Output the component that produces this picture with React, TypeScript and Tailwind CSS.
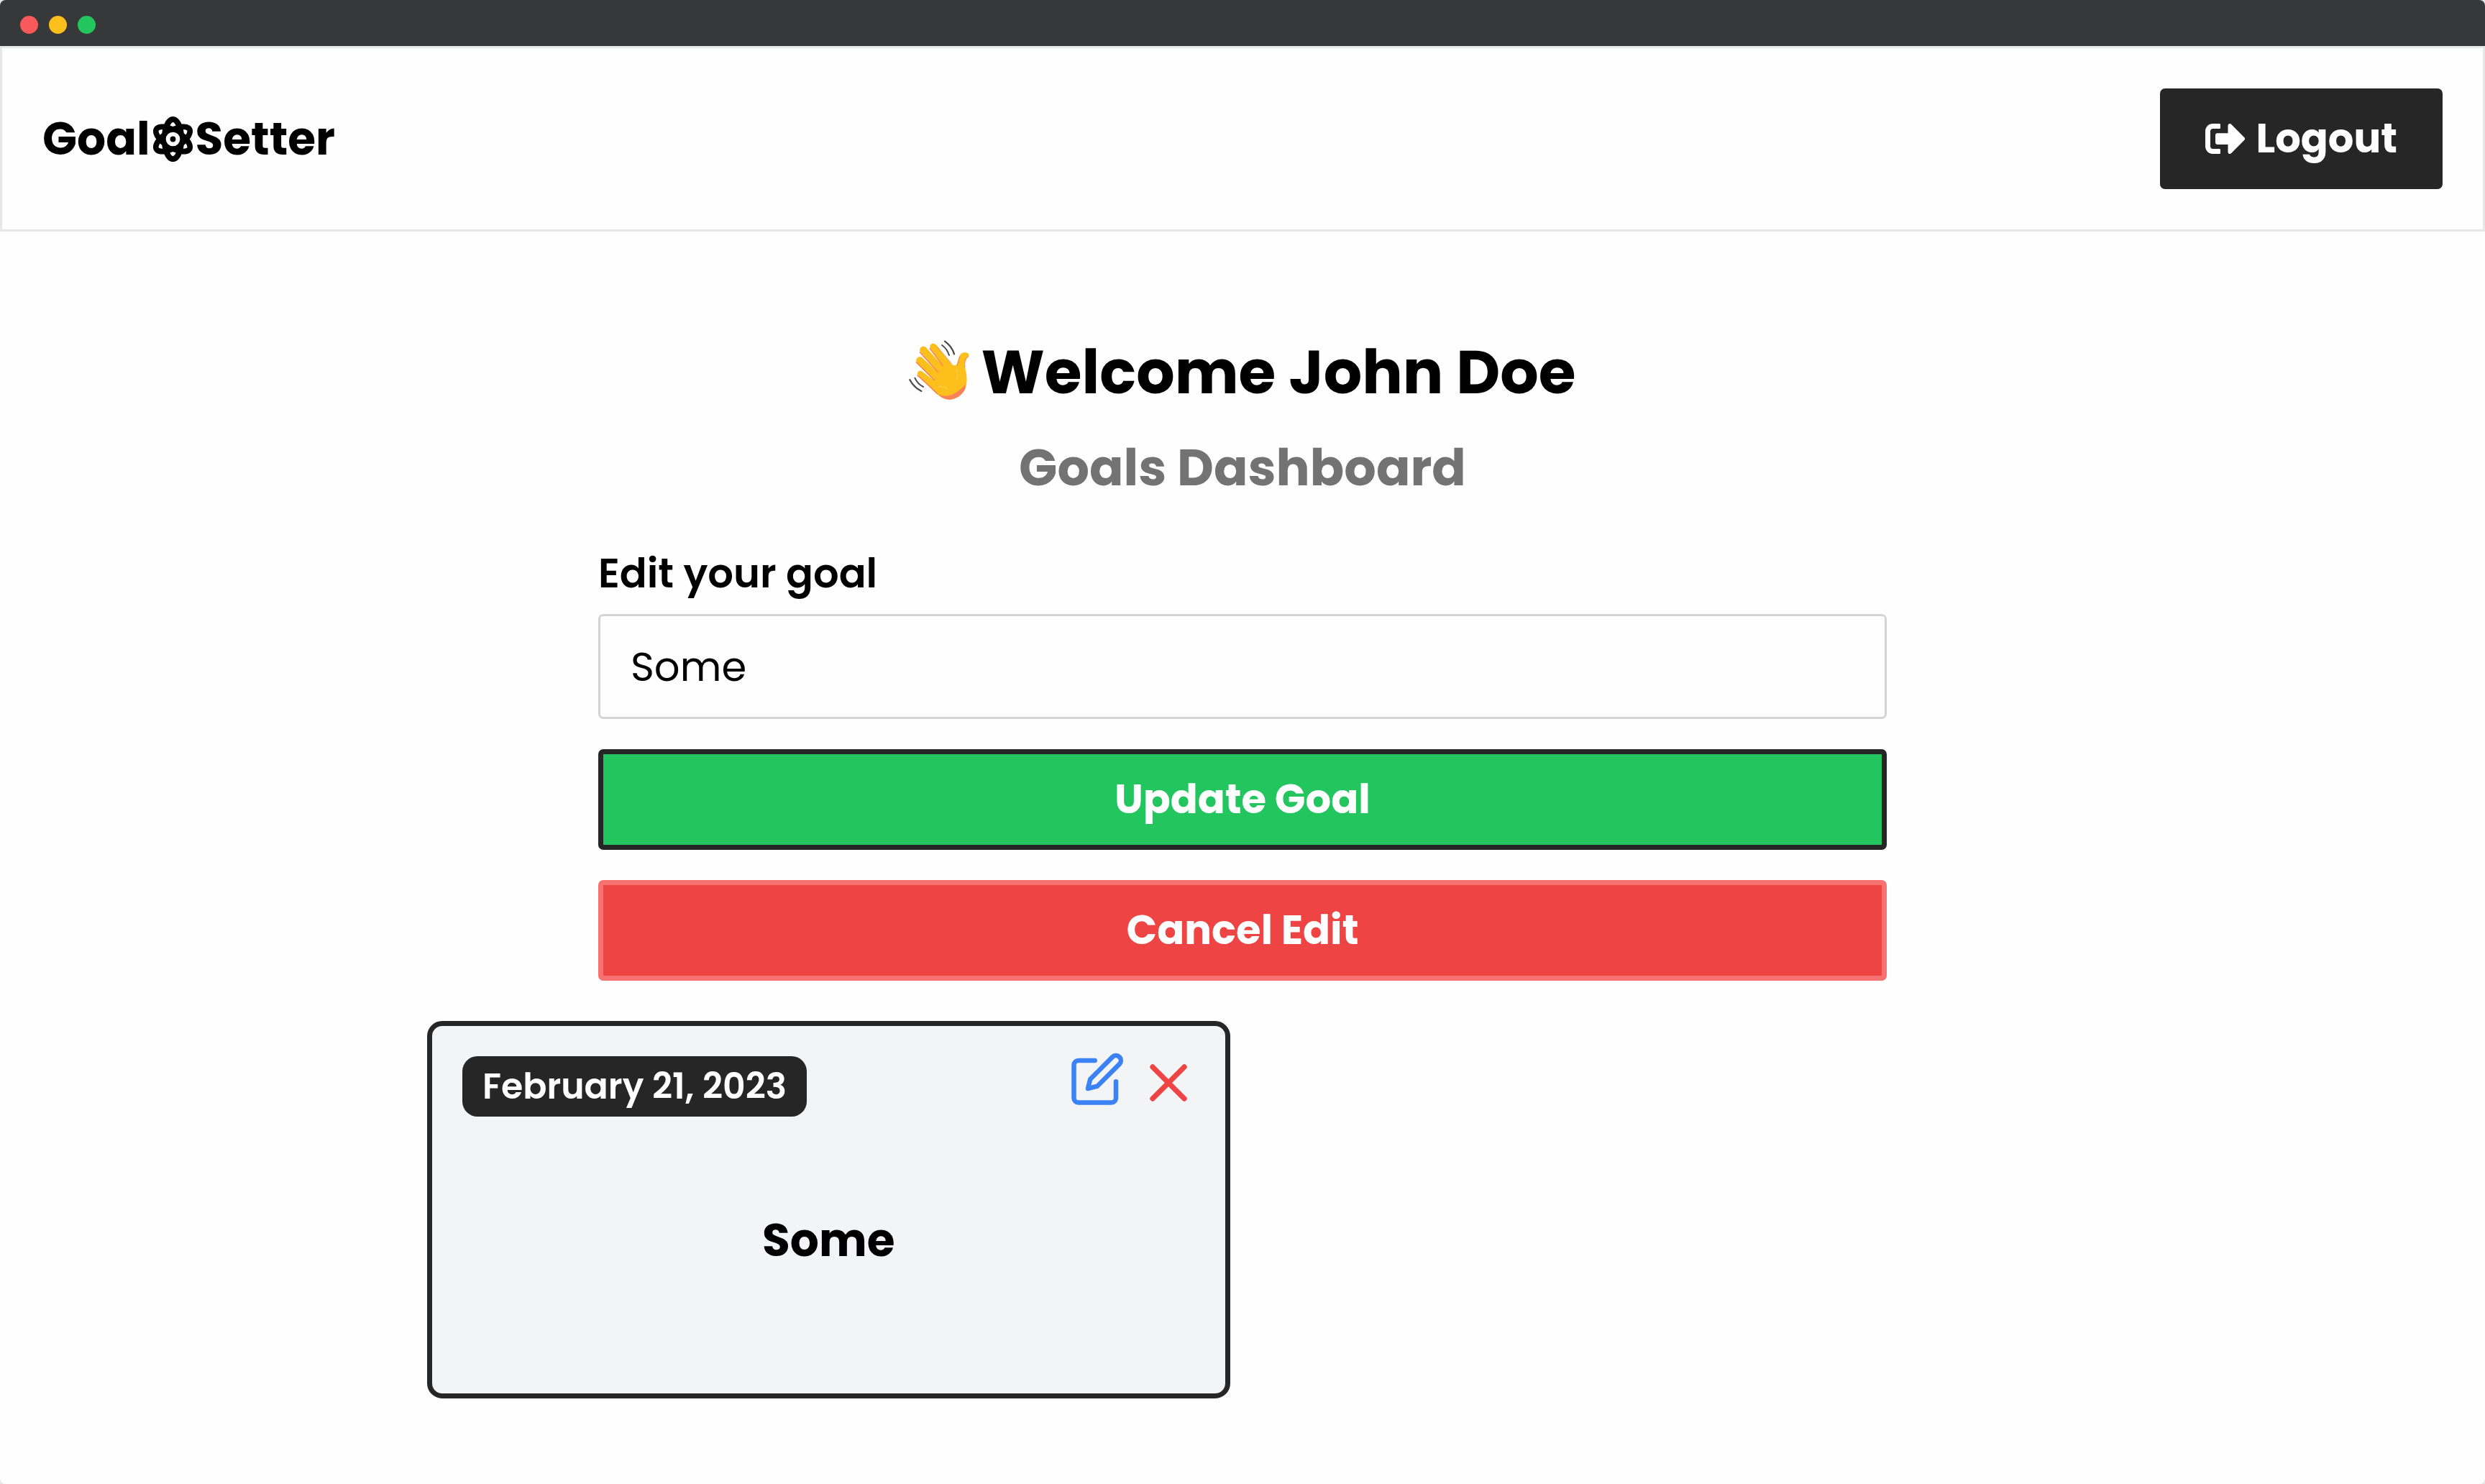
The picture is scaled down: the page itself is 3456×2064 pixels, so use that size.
import { useState } from 'react';
import { FaAtom, FaSignOutAlt } from 'react-icons/fa';
import { FiEdit, FiX } from 'react-icons/fi';

function WavingHand() {
  return (
    <svg viewBox="72 99 252 273" className="h-[91px] w-[84px]" role="img" aria-label="Waving hand">
      <g fill="none" strokeLinecap="round">
        <path d="M222 104Q252 126 261 157" stroke="#4b4b4b" strokeWidth="7" />
        <path d="M210 120Q232 136 240 162" stroke="#4b4b4b" strokeWidth="6" />
        <path d="M76 265Q92 296 124 312" stroke="#4b4b4b" strokeWidth="7" />
        <path d="M97 257Q108 282 132 294" stroke="#4b4b4b" strokeWidth="6" />
      </g>
      <path
        d="M147 282L112 249C102 237 112 222 126 229L180 270L106 195C96 180 110 162 126 171L195 235L120 149C110 132 130 118 143 129L214 207L161 134C154 116 174 106 187 120L250 198C260 210 272 206 275 192L282 169C288 152 302 149 315 152C325 156 324 166 317 171C303 181 302 203 308 221C316 251 316 285 305 307C288 336 258 352 229 346C205 342 187 322 147 282Z"
        fill="#fcbf1c"
      />
      <g fill="none" stroke="#f8795f" strokeWidth="4" strokeLinecap="round" strokeLinejoin="round">
        <path d="M189 126L250 197" strokeWidth="2" />
        <path d="M159 134L213 205" />
        <path d="M118 150L193 233" />
        <path d="M103 192L178 266" />
        <path d="M108 246L147 282L192 324" />
        <path d="M274 204Q280 180 284 168" strokeWidth="3" />
        <path d="M320 166Q300 184 306 212" strokeWidth="3" />
      </g>
      <path d="M192 324Q246 352 307 284Q310 296 305 307C288 336 258 352 229 346C214 343 203 335 192 324Z" fill="#f9825a" />
      <path d="M198 294Q216 286 234 304M270 224Q282 240 270 266" fill="none" stroke="#ffe07a" strokeWidth="4" strokeLinecap="round" strokeDasharray="1 8" />
    </svg>
  );
}

function TitleBar() {
  return (
    <div className="flex h-16 items-center gap-[15px] bg-[#373839] px-7 pt-1">
      <span className="size-[25px] rounded-full bg-[#f9595a]" />
      <span className="size-[25px] rounded-full bg-[#fcbf1c]" />
      <span className="size-[25px] rounded-full bg-[#22c55e]" />
    </div>
  );
}

function Header() {
  return (
    <header className="flex items-center justify-between border-[3px] border-gray-200 p-14">
      <a href="#" className="flex items-center text-[63px] leading-[98px] font-bold">
        Goal
        <FaAtom />
        Setter
      </a>
      <button
        type="button"
        className="flex items-center gap-3.5 rounded-[7px] border-[7px] border-neutral-800 bg-neutral-800 px-14 py-[21px] text-[56px] leading-[84px] font-bold text-white"
      >
        <FaSignOutAlt />
        Logout
      </button>
    </header>
  );
}

function GoalForm() {
  const [goal, setGoal] = useState('Some');
  return (
    <form className="mt-14 flex w-full max-w-[1792px] flex-col text-[56px] leading-[84px]" onSubmit={(e) => e.preventDefault()}>
      <label htmlFor="goal" className="font-semibold">
        Edit your goal
      </label>
      <input
        id="goal"
        type="text"
        value={goal}
        onChange={(e) => setGoal(e.target.value)}
        className="mt-3.5 h-[146px] w-full rounded-[7px] border-[3px] border-neutral-300 bg-transparent px-[42px] outline-none"
      />
      <button type="submit" className="mt-[42px] rounded-[7px] border-[7px] border-neutral-800 bg-[#22c55e] py-[21px] font-bold text-white">
        Update Goal
      </button>
      <button type="button" className="mt-[42px] rounded-[7px] border-[7px] border-[#f87171] bg-[#ef4444] py-[21px] font-bold text-white">
        Cancel Edit
      </button>
    </form>
  );
}

function GoalCard({ date, text }: { date: string; text: string }) {
  return (
    <article className="flex min-h-[525px] flex-col rounded-[21px] border-[7px] border-neutral-800 bg-gray-100 p-[42px]">
      <div className="flex items-start justify-between">
        <time className="rounded-[21px] bg-neutral-800 px-7 py-[7px] text-[49px] leading-[70px] font-semibold text-white">{date}</time>
        <div className="-mt-[7px] -mr-[7px] flex h-[84px] items-start gap-4">
          <button type="button" aria-label="Edit goal" className="text-[#3b82f6]">
            <FiEdit className="size-[78px]" />
          </button>
          <button type="button" aria-label="Delete goal" className="text-[#ef4444]">
            <FiX className="size-[88px]" />
          </button>
        </div>
      </div>
      <h3 className="my-auto text-center text-[63px] leading-[98px] font-bold">{text}</h3>
    </article>
  );
}

export default function App() {
  return (
    <div className="bg-[#e5e5e5]">
      <div className="min-h-screen overflow-hidden rounded-lg bg-[#fefefe] font-['Poppins','Inter',sans-serif] text-black">
        <TitleBar />
        <Header />
        <main className="flex flex-col items-center px-14 pt-[140px]">
          <h1 className="flex items-center gap-4 text-[84px] leading-[112px] font-bold">
            <WavingHand />
            Welcome John Doe
          </h1>
          <h2 className="mt-7 text-[70px] leading-[98px] font-bold text-[#737373]">Goals Dashboard</h2>
          <GoalForm />
          <section className="mt-14 grid w-full max-w-[2268px] grid-cols-2 gap-[35px]">
            <GoalCard date="February 21, 2023" text="Some" />
          </section>
        </main>
      </div>
    </div>
  );
}
